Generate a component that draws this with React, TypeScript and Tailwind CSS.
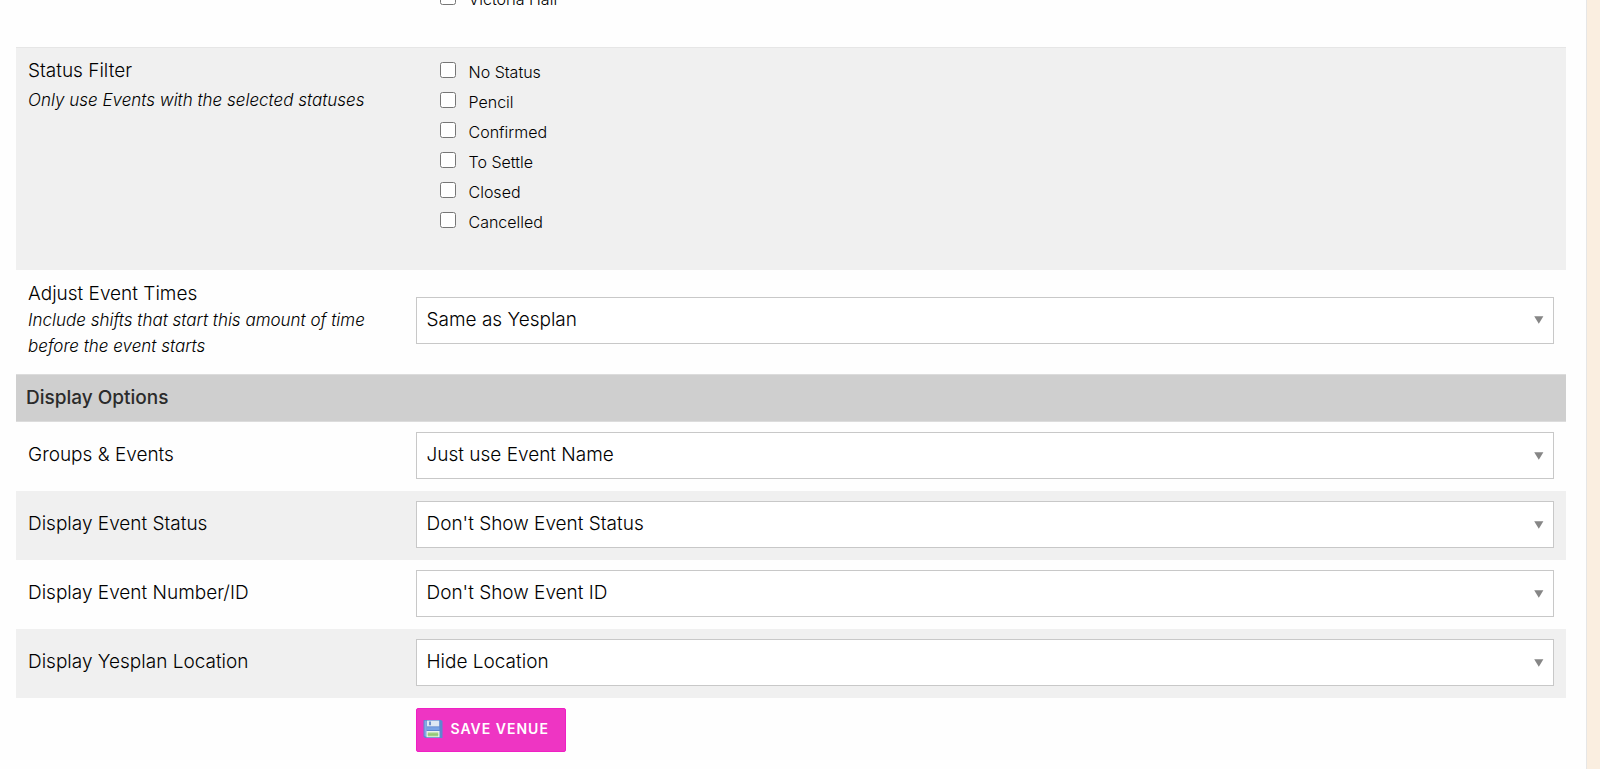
import React from 'react';

const venues = ['Victoria Hall'];

const statuses = ['No Status', 'Pencil', 'Confirmed', 'To Settle', 'Closed', 'Cancelled'];

const displayOptions = [
  { id: 'groups', label: 'Groups & Events', value: 'Just use Event Name', shaded: false },
  { id: 'status', label: 'Display Event Status', value: "Don't Show Event Status", shaded: true },
  { id: 'number', label: 'Display Event Number/ID', value: "Don't Show Event ID", shaded: false },
  { id: 'location', label: 'Display Yesplan Location', value: 'Hide Location', shaded: true },
];

const CheckList = ({ name, items }: { name: string; items: string[] }) => (
  <ul className="pl-6">
    {items.map((item) => (
      <li key={item} className="h-[30px]">
        <label className="flex h-full items-center text-base font-light">
          <input type="checkbox" name={name} className="mr-[13px] mb-1 size-4 shrink-0" />
          {item}
        </label>
      </li>
    ))}
  </ul>
);

const SelectField = ({ id, value }: { id: string; value: string }) => (
  <div className="relative">
    <select
      id={id}
      className="block h-[47px] w-full appearance-none border border-[#c8c8c8] bg-white px-2.5 text-[19px] font-light text-black"
    >
      <option>{value}</option>
    </select>
    <svg
      className="pointer-events-none absolute top-1/2 right-2.5 h-2 w-2.5 -translate-y-1/2"
      viewBox="0 0 10 8"
      aria-hidden="true"
    >
      <path d="M0.2 0.3h9.2L4.8 7.8z" fill="#868686" />
    </svg>
  </div>
);

const FloppyIcon = () => (
  <svg className="size-5 shrink-0" viewBox="0 0 20 20" aria-hidden="true">
    <path d="M1 1h17.2l1.3 1.3V19H2L.5 17.5V1.5z" fill="#5f86cf" />
    <path d="M1.5 1.8h2.3v15.8H2.3l-.8-.8z" fill="#86a9e4" />
    <path d="M4 1.6h12.2v5.8H4z" fill="#dfe8f4" />
    <path d="M6 2.4h2v3.8H6z" fill="#6f8fcb" />
    <path d="M3.8 8.2h12.6v2.8H3.8z" fill="#79a3e6" />
    <path d="M3.5 12h13v6.2h-13z" fill="#e9f2ea" />
    <path d="M4.8 13.5h10.4v3.8H4.8z" fill="#9fd084" />
    <path d="M4.8 15h10.4v.7H4.8z" fill="#8fc276" />
  </svg>
);

const App = () => {
  return (
    <div className="min-h-screen bg-[#faeee0] pr-[13px] font-['Inter',sans-serif] text-black">
      <form className="min-h-screen overflow-hidden border-r border-[#e6e6e6] bg-[#fefefe] pr-5 pl-4">
        {/* Venue list, scrolled past its top */}
        <div className="-mt-4 flex pb-[33px]">
          <div className="w-1/4 shrink-0" />
          <div className="flex-1 px-3">
            <CheckList name="venue" items={venues} />
          </div>
        </div>

        {/* Status filter */}
        <div className="flex border-t border-[#e6e6e6] bg-[#f0f0f0] pt-[9px] pb-[33px]">
          <div className="w-1/4 shrink-0 px-3">
            <h3 className="text-[19px] leading-[28px] font-light">Status Filter</h3>
            <p className="mt-0.5 text-[17px] leading-[26px] font-light italic">
              Only use Events with the selected statuses
            </p>
          </div>
          <div className="flex-1 px-3">
            <CheckList name="status" items={statuses} />
          </div>
        </div>

        {/* Event times */}
        <div className="flex items-center pt-[11px] pb-[15px]">
          <div className="w-1/4 shrink-0 px-3">
            <label htmlFor="times" className="block text-[19px] leading-[26px] font-light">
              Adjust Event Times
            </label>
            <p className="text-[17px] leading-[26px] font-light italic">
              Include shifts that start this amount of time before the event starts
            </p>
          </div>
          <div className="flex-1 px-3">
            <SelectField id="times" value="Same as Yesplan" />
          </div>
        </div>

        <h2 className="border-y border-[#dcdcdc] bg-[#cfcfcf] px-2.5 text-[19px] leading-[46px] font-medium text-[#2b2b2b]">
          Display Options
        </h2>

        {displayOptions.map((option) => (
          <div
            key={option.id}
            className={
              option.shaded
                ? 'flex items-center bg-[#f0f0f0] pt-2.5 pb-3'
                : 'flex items-center pt-2.5 pb-3'
            }
          >
            <label htmlFor={option.id} className="w-1/4 shrink-0 px-3 text-[19px] font-light">
              {option.label}
            </label>
            <div className="flex-1 px-3">
              <SelectField id={option.id} value={option.value} />
            </div>
          </div>
        ))}

        <div className="flex pt-2.5 pb-4">
          <div className="w-1/4 shrink-0" />
          <div className="flex-1 px-3">
            <button
              type="button"
              className="flex h-11 items-center gap-2 rounded-xs border border-[#f01fc4] bg-[#ee35c3] pr-4 pb-0.5 pl-1.5 text-sm font-semibold tracking-[1px] text-white"
            >
              <FloppyIcon />
              SAVE VENUE
            </button>
          </div>
        </div>
      </form>
    </div>
  );
};

export default App;
